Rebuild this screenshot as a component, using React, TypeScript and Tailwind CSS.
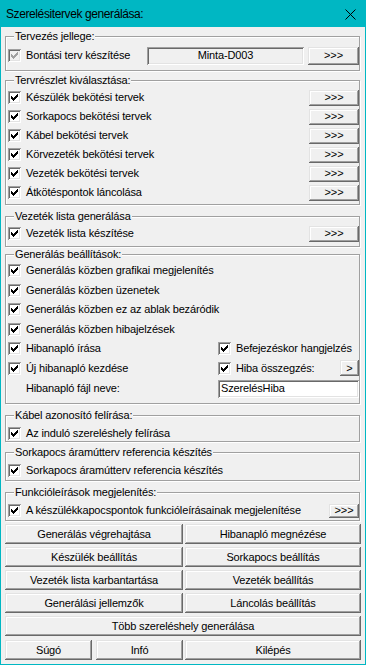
import React from "react";

const RAISED =
  "bg-[#f0f0f0] shadow-[inset_-1px_-1px_0_#696969,inset_1px_1px_0_#e3e3e3,inset_-2px_-2px_0_#a0a0a0,inset_2px_2px_0_#ffffff]";
const SUNKEN =
  "shadow-[inset_1px_1px_0_#a0a0a0,inset_-1px_-1px_0_#ffffff,inset_2px_2px_0_#696969,inset_-2px_-2px_0_#e3e3e3]";

const CHECK_PIXELS: [number, number][] = [
  [6, 0],
  [5, 1], [6, 1],
  [0, 2], [4, 2], [5, 2], [6, 2],
  [0, 3], [1, 3], [3, 3], [4, 3], [5, 3],
  [0, 4], [1, 4], [2, 4], [3, 4], [4, 4],
  [1, 5], [2, 5], [3, 5],
  [2, 6],
];

function Check({ disabled }: { disabled?: boolean }) {
  return (
    <span
      className={`w-[13px] h-[13px] shrink-0 flex items-center justify-center ${
        disabled ? "bg-[#f0f0f0]" : "bg-white"
      } ${SUNKEN}`}
    >
      <svg width="7" height="7" viewBox="0 0 7 7" shapeRendering="crispEdges">
        {CHECK_PIXELS.map(([x, y], i) => (
          <rect key={i} x={x} y={y} width="1" height="1" fill={disabled ? "#a0a0a0" : "#000"} />
        ))}
      </svg>
    </span>
  );
}

function CheckRow({ label, disabled, className = "" }: { label: string; disabled?: boolean; className?: string }) {
  return (
    <div className={`flex items-center gap-[5px] ${className}`}>
      <Check disabled={disabled} />
      <span className="whitespace-nowrap">{label}</span>
    </div>
  );
}

function Btn({ children, className = "" }: { children: React.ReactNode; className?: string }) {
  return (
    <div className={`flex items-center justify-center whitespace-nowrap ${RAISED} ${className}`}>{children}</div>
  );
}

function Group({
  legend,
  className = "",
  children,
}: {
  legend: string;
  className?: string;
  children: React.ReactNode;
}) {
  return (
    <div
      className={`relative ml-[4px] mr-[5px] border border-[#a0a0a0] shadow-[inset_1px_1px_0_#ffffff,1px_1px_0_#ffffff] ${className}`}
    >
      <span className="absolute left-[8px] top-[-7px] px-[1px] bg-[#f0f0f0] leading-[13px] whitespace-nowrap">
        {legend}
      </span>
      {children}
    </div>
  );
}

function ItemRow({ label }: { label: string }) {
  return (
    <div className="flex items-center h-[19px]">
      <CheckRow label={label} className="flex-1" />
      <Btn className="w-[50px] h-[16px]">&gt;&gt;&gt;</Btn>
    </div>
  );
}

export default function App() {
  return (
    <div className="w-[366px] h-[665px] bg-[#f0f0f0] border border-t-0 border-[#00b7c3] flex flex-col font-['Liberation_Sans',Arial,sans-serif] text-[11px] leading-[13px] tracking-[-0.15px] text-black overflow-hidden">
      {/* Title bar */}
      <div className="h-[27px] -mx-px bg-[#00b7c3] flex items-center justify-between pl-[6px] pr-[10px] shrink-0">
        <span className="text-[12px] tracking-[-0.4px] text-black pt-[1px]">Szerelésitervek generálása:</span>
        <svg width="11" height="11" viewBox="0 0 11 11" className="mt-[2px]">
          <path d="M0.5 0.5 L10.5 10.5 M10.5 0.5 L0.5 10.5" stroke="#000" strokeWidth="1" />
        </svg>
      </div>

      {/* Tervezés jellege */}
      <Group legend="Tervezés jellege:" className="mt-[9px] h-[35px] pt-[9px] pl-[2px]">
        <div className="flex items-center h-[19px]">
          <CheckRow label="Bontási terv készítése" disabled className="flex-1" />
          <div className={`w-[157px] h-[18px] flex items-center justify-center bg-[#f0f0f0] ${SUNKEN}`}>
            Minta-D003
          </div>
          <Btn className="ml-[4px] w-[51px] h-[18px]">&gt;&gt;&gt;</Btn>
        </div>
      </Group>

      {/* Tervrészlet kiválasztása */}
      <Group legend="Tervrészlet kiválasztása:" className="mt-[9px] h-[125px] pt-[7px] pl-[2px]">
        <ItemRow label="Készülék bekötési tervek" />
        <ItemRow label="Sorkapocs bekötési tervek" />
        <ItemRow label="Kábel bekötési tervek" />
        <ItemRow label="Körvezeték bekötési tervek" />
        <ItemRow label="Vezeték bekötési tervek" />
        <ItemRow label="Átkötéspontok láncolása" />
      </Group>

      {/* Vezeték lista generálása */}
      <Group legend="Vezeték lista generálása" className="mt-[11px] h-[31px] pt-[7px] pl-[2px]">
        <ItemRow label="Vezeték lista készítése" />
      </Group>

      {/* Generálás beállítások */}
      <Group legend="Generálás beállítások:" className="mt-[7px] h-[150px] pt-[6px] pl-[2px]">
        <div className="flex flex-col">
          <CheckRow label="Generálás közben grafikai megjelenítés" className="h-[19.5px]" />
          <CheckRow label="Generálás közben üzenetek" className="h-[19.5px]" />
          <CheckRow label="Generálás közben ez az ablak bezáródik" className="h-[19.5px]" />
          <CheckRow label="Generálás közben hibajelzések" className="h-[19.5px]" />
          <div className="grid grid-cols-[210px_1fr] h-[19.5px] items-center">
            <CheckRow label="Hibanapló írása" />
            <CheckRow label="Befejezéskor hangjelzés" />
          </div>
          <div className="grid grid-cols-[210px_1fr] h-[19.5px] items-center">
            <CheckRow label="Új hibanapló kezdése" />
            <div className="flex items-center">
              <CheckRow label="Hiba összegzés:" className="flex-1" />
              <Btn className="w-[19px] h-[16px]">&gt;</Btn>
            </div>
          </div>
          <div className="grid grid-cols-[210px_1fr] h-[21px] items-center">
            <span className="pl-[18px]">Hibanapló fájl neve:</span>
            <div className={`h-[18px] bg-white flex items-center pl-[3px] ${SUNKEN}`}>SzerelésHiba</div>
          </div>
        </div>
      </Group>

      {/* Kábel azonosító felírása */}
      <Group legend="Kábel azonosító felírása:" className="mt-[11px] h-[27px] pt-[10px] pl-[2px]">
        <CheckRow label="Az induló szereléshely felírása" className="h-[15px]" />
      </Group>

      {/* Sorkapocs áramútterv */}
      <Group legend="Sorkapocs áramútterv referencia készítés" className="mt-[10px] h-[29px] pt-[10px] pl-[2px]">
        <CheckRow label="Sorkapocs áramútterv referencia készítés" className="h-[15px]" />
      </Group>

      {/* Funkcióleírások */}
      <Group legend="Funkcióleírások megjelenítés:" className="mt-[11px] h-[29px] pt-[10px] pl-[2px]">
        <div className="flex items-center h-[15px]">
          <CheckRow label="A készülékkapocspontok funkcióleírásainak megjelenítése" className="flex-1" />
          <Btn className="w-[30px] h-[14px]">&gt;&gt;&gt;</Btn>
        </div>
      </Group>

      {/* Buttons */}
      <div className="ml-[4px] mr-[4px] mt-[3px] grid grid-cols-[178px_1fr] gap-x-[2px] gap-y-[3px]">
        <Btn className="h-[20px]">Generálás végrehajtása</Btn>
        <Btn className="h-[20px]">Hibanapló megnézése</Btn>
        <Btn className="h-[20px]">Készülék beállítás</Btn>
        <Btn className="h-[20px]">Sorkapocs beállítás</Btn>
        <Btn className="h-[20px]">Vezeték lista karbantartása</Btn>
        <Btn className="h-[20px]">Vezeték beállítás</Btn>
        <Btn className="h-[20px]">Generálási jellemzők</Btn>
        <Btn className="h-[20px]">Láncolás beállítás</Btn>
        <Btn className="h-[20px] col-span-2">Több szereléshely generálása</Btn>
        <div className="grid grid-cols-2 gap-x-[4px] mt-[1px]">
          <Btn className="h-[20px]">Súgó</Btn>
          <Btn className="h-[20px]">Infó</Btn>
        </div>
        <Btn className="h-[20px] mt-[1px]">Kilépés</Btn>
      </div>
    </div>
  );
}
